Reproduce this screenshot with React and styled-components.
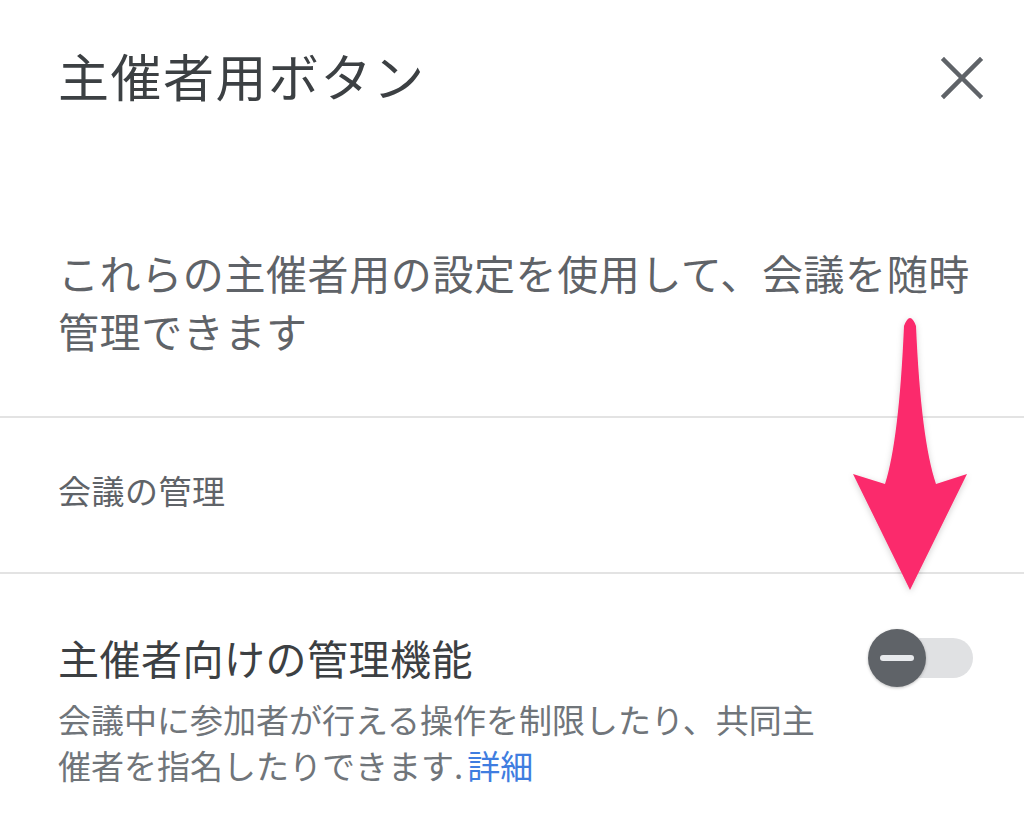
import React, { useState } from 'react';
import styled, { createGlobalStyle } from 'styled-components';

const GlobalStyle = createGlobalStyle`
    html, body {
        margin: 0;
        padding: 0;
        background: #ffffff;
    }
    body {
        font-family: 'Noto Sans CJK JP', 'Noto Sans', sans-serif;
        -webkit-font-smoothing: antialiased;
    }
`;

const App = () => {
    const [enabled, setEnabled] = useState(false);

    return (
        <Panel>
            <GlobalStyle />

            {/* Header */}
            <Header>
                <Title>主催者用ボタン</Title>
                <CloseButton aria-label="閉じる">
                    <svg width="44" height="44" viewBox="0 0 44 44">
                        <path d="M4 4 L40 40 M40 4 L4 40" stroke="#5f6368" strokeWidth="4.5" strokeLinecap="square" />
                    </svg>
                </CloseButton>
            </Header>

            <Intro>これらの主催者用の設定を使用して、会議を随時管理できます</Intro>

            <Divider />
            <SectionLabel>会議の管理</SectionLabel>
            <Divider />

            {/* Host management row */}
            <SettingRow>
                <SettingText>
                    <SettingTitle>主催者向けの管理機能</SettingTitle>
                    <SettingDesc>
                        会議中に参加者が行える操作を制限したり、共同主催者を指名したりできます.
                        <Link href="#">詳細</Link>
                    </SettingDesc>
                </SettingText>
                <Toggle onClick={() => setEnabled(!enabled)} aria-pressed={enabled}>
                    <Track />
                    <Thumb>
                        <Minus />
                    </Thumb>
                </Toggle>
            </SettingRow>

            {/* Annotation arrow */}
            <Arrow viewBox="0 0 1024 830" width="1024" height="830">
                <defs>
                    <filter id="shadow" x="-20%" y="-20%" width="140%" height="140%">
                        <feDropShadow dx="0" dy="2" stdDeviation="3" floodColor="#000" floodOpacity="0.18" />
                    </filter>
                </defs>
                <path
                    d="M904 326 Q910 310 916 326 Q921 440 936 484 L967 474 L910 590 L853 474 L885 484 Q899 440 904 326 Z"
                    fill="#fb2b6c"
                    filter="url(#shadow)"
                />
            </Arrow>
        </Panel>
    );
};

const Panel = styled.div`
    position: relative;
    width: 1024px;
    height: 830px;
    overflow: hidden;
    background: #ffffff;
`;

const Header = styled.div`
    display: flex;
    align-items: center;
    justify-content: space-between;
    height: 60px;
    padding: 45px 40px 0 58px;
`;

const Title = styled.h1`
    margin: 0;
    font-size: 51px;
    line-height: 60px;
    font-weight: 400;
    color: #3c4043;
    letter-spacing: 1.5px;
`;

const CloseButton = styled.button`
    display: flex;
    align-items: center;
    justify-content: center;
    width: 44px;
    height: 44px;
    padding: 0;
    border: none;
    background: none;
    cursor: pointer;
    margin-top: 6px;
`;

const Intro = styled.p`
    margin: 138px 40px 0 58px;
    padding-bottom: 57px;
    font-size: 41px;
    line-height: 58px;
    letter-spacing: 0.6px;
    color: #5f6368;
`;

const Divider = styled.div`
    height: 2px;
    background: #e3e3e3;
`;

const SectionLabel = styled.div`
    padding: 49px 58px 59px;
    font-size: 33px;
    line-height: 46px;
    color: #5f6368;
    letter-spacing: 0.5px;
`;

const SettingRow = styled.div`
    display: flex;
    align-items: flex-start;
    justify-content: space-between;
    padding: 55px 51px 0 58px;
`;

const SettingText = styled.div`
    display: flex;
    flex-direction: column;
    gap: 11px;
    max-width: 775px;
`;

const SettingTitle = styled.div`
    font-size: 41px;
    line-height: 56px;
    letter-spacing: 0.5px;
    color: #3c4043;
`;

const SettingDesc = styled.div`
    font-size: 33px;
    line-height: 46px;
    color: #70757a;
`;

const Link = styled.a`
    margin-left: 4px;
    color: #3f7de0;
    text-decoration: none;
`;

const Toggle = styled.button`
    position: relative;
    flex-shrink: 0;
    width: 105px;
    height: 58px;
    padding: 0;
    border: none;
    background: none;
    cursor: pointer;
`;

const Track = styled.span`
    position: absolute;
    left: 8px;
    right: 0;
    top: 9px;
    height: 40px;
    border-radius: 20px;
    background: #e0e1e3;
`;

const Thumb = styled.span`
    position: absolute;
    left: 0;
    top: 0;
    width: 58px;
    height: 58px;
    border-radius: 50%;
    background: #5f6368;
    display: flex;
    align-items: center;
    justify-content: center;
    box-shadow: 0 1px 3px rgba(0, 0, 0, 0.25);
`;

const Minus = styled.span`
    width: 34px;
    height: 6px;
    border-radius: 3px;
    background: #e8eaed;
`;

const Arrow = styled.svg`
    position: absolute;
    top: 0;
    left: 0;
    pointer-events: none;
`;

export default App;
